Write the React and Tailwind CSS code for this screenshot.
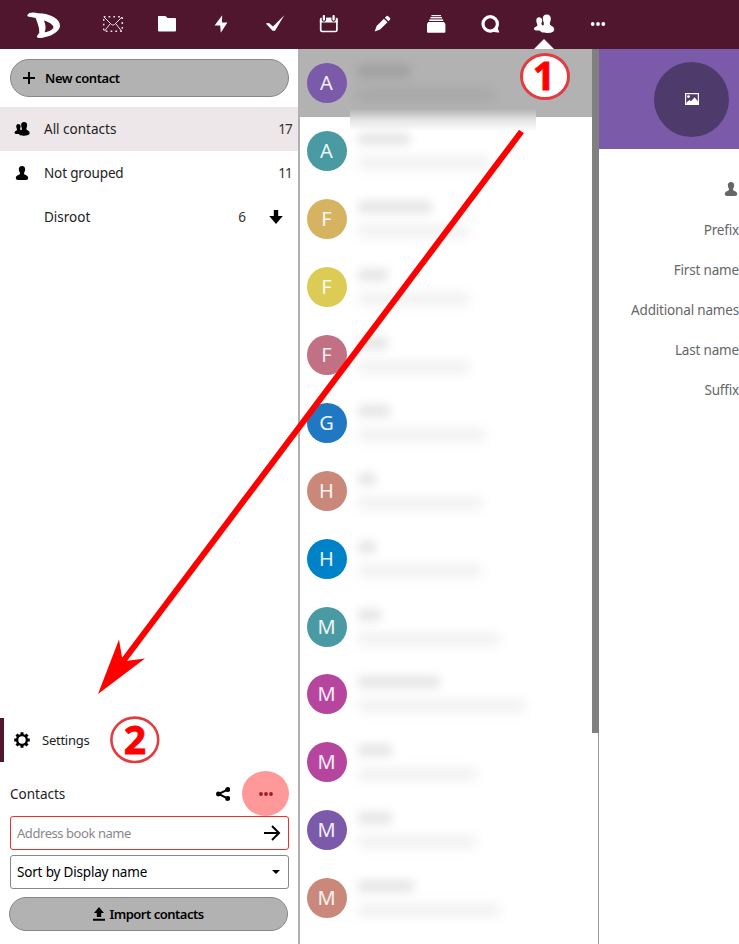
import React from "react";

// Header icons share a 24x24 box centred on their slot.
const headerIcons = [
  // encrypted mail
  <g key="mail" fill="none" stroke="#fff">
    <rect x="2.7" y="4.7" width="18.6" height="14.6" strokeWidth="1.5" strokeDasharray="1.8 3" opacity="0.85" />
    <path d="M3 5 L10.6 12.6 Q12 13.8 13.4 12.6 L21 5 M3.5 19 L9 12 M20.5 19 L15 12" strokeWidth="1" opacity="0.85" />
  </g>,
  // folder
  <path key="folder" fill="#fff" d="M3.5 4H10.5L12.5 6H20Q21 6 21 7V18.5Q21 19.5 20 19.5H4Q3 19.5 3 18.5V4.5Q3 4 3.5 4Z" />,
  // bolt
  <path key="bolt" fill="#fff" d="M13.2 3.2 5.6 13.4H11.2L11.8 20.8 18.4 10.4H12.9Z" />,
  // check
  <path key="check" fill="#fff" d="M2.8 11.6 6 10.9 10 14.6 21.3 3.2 12 18.8H9.6Z" />,
  // calendar
  <g key="cal">
    <rect x="3.7" y="6.6" width="16.2" height="12.9" rx="1.6" fill="none" stroke="#fff" strokeWidth="1.7" />
    <path d="M2.9 7.2Q2.9 5.8 4.3 5.8H19.3Q20.7 5.8 20.7 7.2V10.6H2.9Z" fill="#fff" />
    <path d="M6.9 4.6V7.5M16.6 4.6V7.5" stroke="#50162d" strokeWidth="4.4" strokeLinecap="round" />
    <path d="M6.9 4.2V7.6M16.6 4.2V7.6" stroke="#fff" strokeWidth="2.3" strokeLinecap="round" />
  </g>,
  // pencil
  <path key="pen" fill="#fff" d="M4.7 19.4 6.6 14 13.9 6.7 17.5 10.3 10.1 17.5ZM14.9 5.7 16.6 4.1Q17.4 3.5 18.2 4.2L20 6.1Q20.6 6.9 20 7.7L18.4 9.3Z" />,
  // deck
  <g key="deck" fill="#fff">
    <rect x="7.4" y="3" width="9.6" height="1.2" />
    <rect x="6.4" y="5" width="11.6" height="1.4" />
    <rect x="5.2" y="7.4" width="14" height="1.6" />
    <path d="M4.3 10H20L21.4 12V19.9Q21.4 20.7 20.4 20.7H4Q3 20.7 3 19.9V12Z" />
  </g>,
  // talk
  <g key="talk">
    <circle cx="12.2" cy="11.9" r="7.2" fill="none" stroke="#fff" strokeWidth="3.2" />
    <path d="M14 19.5 19 14.5 21.3 20.2Q21 21.3 14 19.5Z" fill="#fff" />
  </g>,
  // contacts
  <People key="people" color="#fff" />,
  <g key="more" fill="#fff"><circle cx="6.7" cy="12" r="1.9" /><circle cx="12" cy="12" r="1.9" /><circle cx="17.3" cy="12" r="1.9" /></g>,
];

function People({ color }) {
  return (
    <g fill={color}>
      <path d="M7 5.2C9 5.2 10.2 6.6 10.2 8.2C10.2 10 9.6 10.7 9.4 11.5C9.6 13 10.6 13.2 11 14L9 18.5H4Q2 18.2 2 17C2 14.8 4.8 14.6 5.4 13.4C5.6 12 4.3 11 4.3 8.4C4.3 6.5 5.3 5.2 7 5.2Z" />
      <path d="M14.8 2.5C17.5 2.5 18.8 4.2 18.8 6.5C18.8 9.3 17.8 10.3 17.8 12C18.2 14 22.2 14.2 22.2 17.4C22.2 20.2 18.7 20.9 14.9 20.9S7.6 20.2 7.6 17.6C7.6 14.4 11.4 14.3 11.9 12.2C12 10.2 10.8 9 10.8 6.3C10.8 4 12.4 2.5 14.8 2.5Z" />
    </g>
  );
}

function Person({ className }) {
  return (
    <svg viewBox="0 0 14 14" className={className} fill="currentColor">
      <path d="M7 0C9.2 0 10.2 1.4 10.2 3.3C10.2 5.4 9 6.2 9 7.6C9.4 9.6 13.2 9 13.2 12Q13.2 13.8 11 14H3Q.8 13.8.8 12C.8 9 4.6 9.6 5 7.6C5 6.2 3.8 5.4 3.8 3.3C3.8 1.4 4.8 0 7 0Z" />
    </svg>
  );
}

const contacts = [
  ["A", "bg-[#7b5aa9]", "w-[52px]", "w-[136px]"],
  ["A", "bg-[#4a9aa3]", "w-[52px]", "w-[132px]"],
  ["F", "bg-[#d5b361]", "w-[74px]", "w-[110px]"],
  ["F", "bg-[#dccb55]", "w-[30px]", "w-[112px]"],
  ["F", "bg-[#c27084]", "w-[30px]", "w-[112px]"],
  ["G", "bg-[#2078c2]", "w-[32px]", "w-[128px]"],
  ["H", "bg-[#c98879]", "w-[18px]", "w-[124px]"],
  ["H", "bg-[#0082c9]", "w-[18px]", "w-[124px]"],
  ["M", "bg-[#4a9aa3]", "w-[23px]", "w-[142px]"],
  ["M", "bg-[#b6469d]", "w-[82px]", "w-[168px]"],
  ["M", "bg-[#b6469d]", "w-[34px]", "w-[119px]"],
  ["M", "bg-[#7b5aa9]", "w-[34px]", "w-[118px]"],
  ["M", "bg-[#c98879]", "w-[56px]", "w-[142px]"],
];

function Header() {
  return (
    <header className="flex h-[49px] shrink-0 items-start bg-[#50162d]">
      <svg className="h-[48px] w-[86px] shrink-0" viewBox="0 0 86 48">
        <path fill="#fff" fillRule="evenodd" d="M27.2 16C27.5 12.5 33 11.9 38 13.3C50 13.2 60 19 60 25.5C60 32 49 37.8 39 38Q36.4 37.6 37 36L39.3 32.8C39.5 27 37 22 35.7 18C32.5 16.8 29 17.5 27.2 16ZM44 20.4C46 25.5 46 29 44.6 32.3C49 31.5 53.6 29.6 53.4 27C53 24.4 48.5 21.5 44 20.4Z" />
      </svg>
      <nav className="flex">
        {headerIcons.map((icon, i) => (
          <div key={i} className="relative flex h-[49px] w-[53.9px] justify-center pt-[12px]">
            <svg viewBox="0 0 24 24" className="h-6 w-6">{icon}</svg>
            {i === 8 && (
              <div className="absolute bottom-0 left-[17px] h-0 w-0 border-x-[10px] border-b-[10px] border-x-transparent border-b-white" />
            )}
          </div>
        ))}
      </nav>
    </header>
  );
}

function Sidebar() {
  return (
    <aside className="flex w-[300px] shrink-0 flex-col border-r-2 border-[#b0b0b0]">
      <button className="mt-[10px] ml-[10px] flex h-[38px] w-[279px] items-center rounded-full border border-[#888] bg-[#b2b2b2] pl-3 text-[13px] font-semibold tracking-[-0.43px] text-black">
        <svg viewBox="0 0 12 12" className="mr-[10px] h-3 w-3"><path d="M6 0V12M0 6H12" stroke="#000" strokeWidth="2" /></svg>
        <span className="pt-[2px]">New contact</span>
      </button>
      <div className="mt-[10px] flex h-11 items-center bg-[#ede7e9] pr-[6px] pl-[13px]">
        <svg viewBox="0 0 24 24" className="mr-[13px] h-[18px] w-[18px]"><People color="#000" /></svg>
        <span className="flex-1">All contacts</span>
        <span className="tracking-[-0.8px] text-[#333]">17</span>
      </div>
      <div className="flex h-11 items-center pr-[6px] pl-[15px]">
        <Person className="mr-[15px] h-[14px] w-[14px] text-black" />
        <span className="flex-1 tracking-[-0.15px]">Not grouped</span>
        <span className="tracking-[-0.8px] text-[#333]">11</span>
      </div>
      <div className="flex h-11 items-center pr-[15px] pl-[44px]">
        <span className="flex-1">Disroot</span>
        <span className="mr-[23px] text-[#333]">6</span>
        <svg viewBox="0 0 14 14" className="h-[14px] w-[14px]"><path d="M4.8 0H9.2V6H13.8L7 14 .2 6H4.8Z" /></svg>
      </div>

      <div className="mt-auto flex h-11 items-center border-l-4 border-[#50162d] pl-[10px] text-[13px] tracking-[-0.25px]">
        <svg viewBox="0 0 16 16" className="mr-[12px] h-4 w-4">
          <circle cx="8" cy="8" r="4.9" fill="none" stroke="#000" strokeWidth="2.4" />
          <path d="M8 .2V3M8 13V15.8M.2 8H3M13 8H15.8M2.5 2.5 4.4 4.4M11.6 11.6 13.5 13.5M13.5 2.5 11.6 4.4M4.4 11.6 2.5 13.5" stroke="#000" strokeWidth="3" />
        </svg>
        <span className="pt-[2px]">Settings</span>
      </div>
      <div className="mt-[9px] flex h-[45px] items-center pr-[9px] pl-[10px]">
        <span className="flex-1 pt-[2px]">Contacts</span>
        <svg viewBox="0 0 14 14" className="mr-[12px] h-[14px] w-[14px]">
          <path d="M12 2.3 2.6 7 12 11.7" fill="none" stroke="#000" strokeWidth="2" />
          <circle cx="11.7" cy="2.6" r="2.5" /><circle cx="2.4" cy="7" r="2.4" /><circle cx="11.7" cy="11.4" r="2.5" />
        </svg>
        <div className="flex h-[45px] w-[47px] items-center justify-center rounded-[50%] bg-[#ff9999]">
          <svg viewBox="0 0 14 4" className="mt-px ml-px h-1 w-[14px]" fill="#991f1f"><circle cx="2" cy="2" r="1.9" /><circle cx="7" cy="2" r="1.9" /><circle cx="12" cy="2" r="1.9" /></svg>
        </div>
      </div>
      <div className="ml-[10px] flex h-[34px] w-[279px] items-center rounded-[3px] border border-[#e9322d] pr-[7px] pl-[6px] text-[13px] tracking-[-0.44px] text-[#888]">
        <span className="flex-1 pt-[2px]">Address book name</span>
        <svg viewBox="0 0 18 16" className="h-4 w-[18px]"><path d="M1 8H16M9 1 16 8 9 15" fill="none" stroke="#000" strokeWidth="2" /></svg>
      </div>
      <div className="mt-[5px] ml-[10px] flex h-[34px] w-[279px] items-center rounded-[3px] border border-[#888] pr-[8px] pl-[6px] text-[13.5px] tracking-[-0.18px] text-black">
        <span className="flex-1 pt-px">Sort by Display name</span>
        <svg viewBox="0 0 8 4" className="h-1 w-2"><path d="M0 0H8L4 4Z" /></svg>
      </div>
      <button className="mt-[8px] mb-[13px] ml-[9px] flex h-[34px] w-[279px] items-center justify-center rounded-full border border-[#888] bg-[#b2b2b2] text-[13px] font-semibold tracking-[-0.5px] text-black">
        <svg viewBox="0 0 12 14" className="mr-1 h-[14px] w-3"><path d="M6 0 11 6H8.2V10H3.8V6H1ZM0 11.8H12V13.8H0Z" /></svg>
        <span className="pt-[2px]">Import contacts</span>
      </button>
    </aside>
  );
}

function ContactList() {
  return (
    <section className="flex w-[299px] shrink-0 overflow-hidden">
      <div className="w-[292px]">
        {contacts.map(([letter, color, nameWidth, mailWidth], i) => (
          <div key={i} className={`relative flex h-[67.95px] items-start pl-[6.5px] ${i === 0 ? "bg-[#b2b2b2]" : ""}`}>
            <div className={`mt-[14px] flex h-10 w-10 items-center justify-center rounded-full text-[20px] text-white/90 ${color}`}>
              {letter}
            </div>
            <div className="relative z-10 pt-[16px] pl-[11px]">
              <div className={`h-[12px] rounded bg-black/10 blur-[5px] ${nameWidth}`} />
              <div className={`mt-[12px] h-[12px] rounded bg-black/6 blur-[6px] ${mailWidth}`} />
            </div>
            {i === 0 && (
              <div className="absolute top-[60px] left-[50px] h-[22px] w-[186px] bg-linear-to-b from-[#b2b2b2] via-[#e4e4e4] to-white" />
            )}
          </div>
        ))}
      </div>
      <div className="w-[7px] border-r border-[#999]">
        <div className="h-[684px] w-[7px] bg-[#808080]" />
      </div>
    </section>
  );
}

function Details() {
  return (
    <main className="flex min-w-0 flex-1 flex-col">
      <div className="flex h-[100px] items-start bg-[#7b5aa9] pt-[12.5px] pl-[55px]">
        <div className="flex h-[75px] w-[75px] items-center justify-center rounded-full bg-[#4f3a6c]">
          <svg viewBox="0 0 14 12" className="h-3 w-[14px]">
            <path d="M.6.6H13.4V11.4H.6Z" fill="none" stroke="#fff" strokeWidth="1.2" />
            <circle cx="3.5" cy="3.6" r="1.4" fill="#fff" />
            <path d="M1.5 11V9.5L4.5 7 6 8.2 9.6 4.3 13 8.4V11Z" fill="#fff" />
          </svg>
        </div>
      </div>
      <div className="flex flex-col items-end text-[13.5px] tracking-[-0.18px] text-[#666]">
        <Person className="mt-[33px] mr-[1px] h-[14px] w-[14px]" />
        <div className="mt-[14px] flex flex-col items-end">
          {["Prefix", "First name", "Additional names", "Last name", "Suffix"].map((label) => (
            <div key={label} className="flex h-10 items-center whitespace-nowrap">{label}</div>
          ))}
        </div>
      </div>
    </main>
  );
}

// Tutorial markers drawn over the window.
function Annotations() {
  return (
    <svg className="pointer-events-none absolute inset-0 z-20 h-[944px] w-[739px]" viewBox="0 0 739 944">
      <path d="M521.5 131.5 124 660" stroke="#f00" strokeWidth="6" />
      <path d="M98 694 119 639.5 122 657.5 127.5 660.8 145 658.5Z" fill="#f00" />
      <ellipse cx="545" cy="76.5" rx="23.5" ry="22" fill="#fff" stroke="#e23b42" strokeWidth="3" />
      <ellipse cx="134.8" cy="739.8" rx="23.4" ry="22.2" fill="#fff" stroke="#e23b42" strokeWidth="2.6" />
      <g className="font-['Noto_Sans',sans-serif] text-[39px] font-bold" fill="#f00" stroke="#f00" strokeWidth="0.8" textAnchor="middle">
        <text x="544" y="89.8">1</text>
        <text x="135" y="753.6">2</text>
      </g>
    </svg>
  );
}

export default function App() {
  return (
    <div className="relative flex h-[944px] w-[739px] flex-col overflow-hidden bg-white font-['Noto_Sans',sans-serif] text-[13.5px] text-[#222]">
      <Header />
      <div className="flex min-h-0 flex-1">
        <Sidebar />
        <ContactList />
        <Details />
      </div>
      <Annotations />
    </div>
  );
}
